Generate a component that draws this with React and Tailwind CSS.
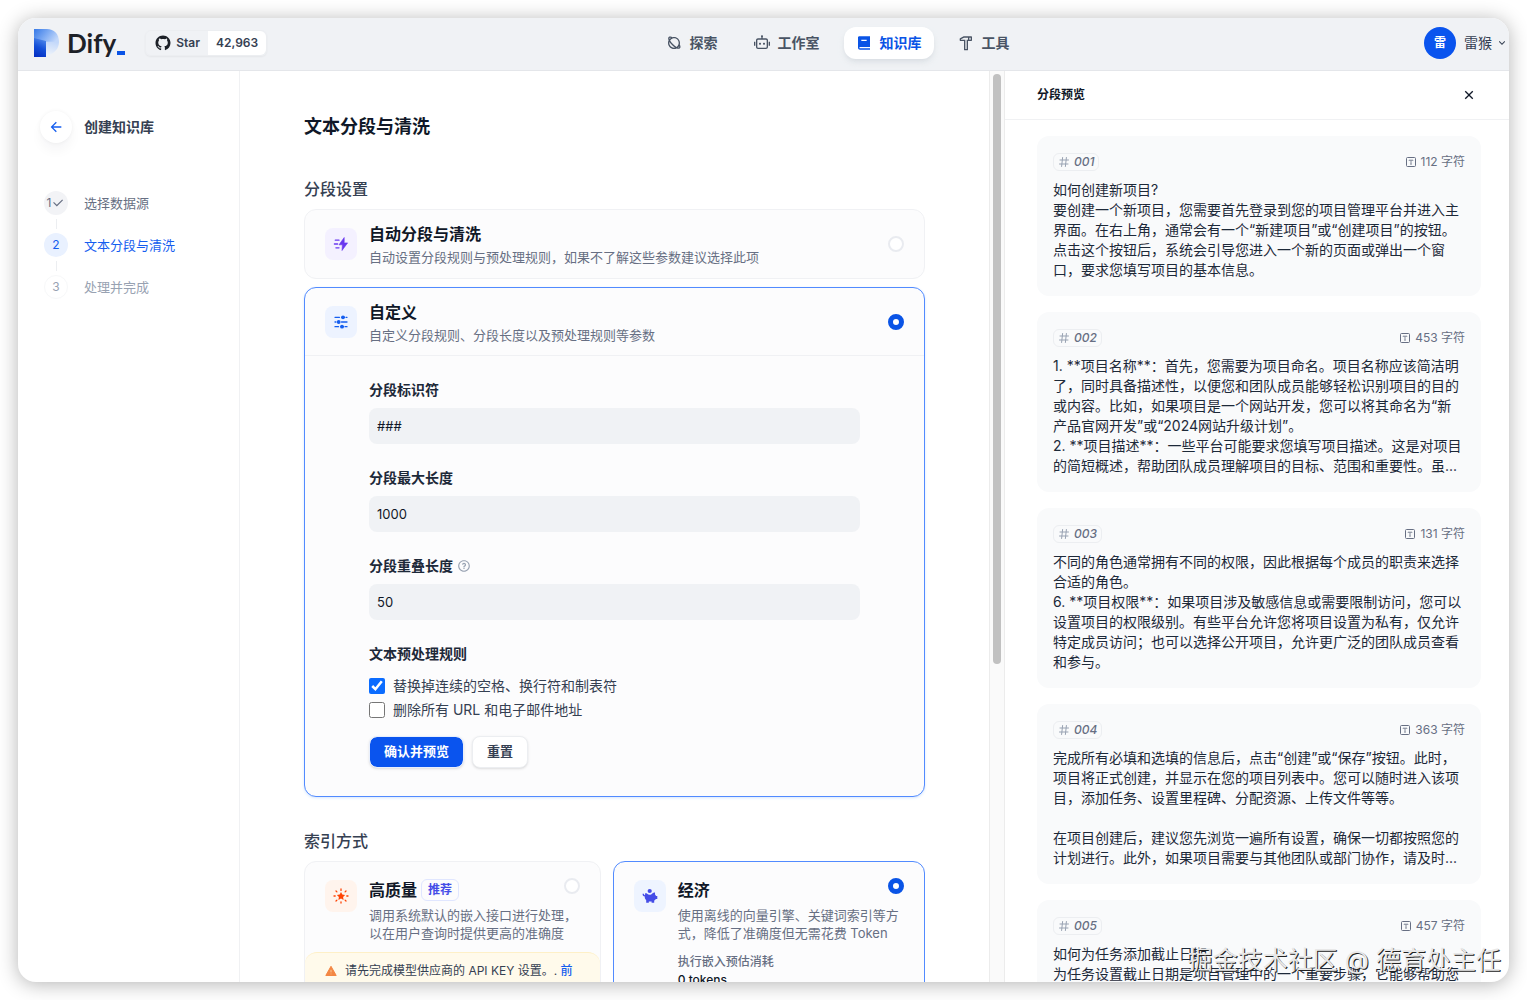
import React, { useState } from 'react';
import {
    RiArrowDownSLine,
    RiArrowLeftLine,
    RiBook2Fill,
    RiCheckLine,
    RiCloseLine,
    RiGithubFill,
    RiHammerLine,
    RiPlanetLine,
    RiQuestionLine,
    RiRobot2Line,
} from 'react-icons/ri';

const navItems = [
    { name: '探索', icon: RiPlanetLine },
    { name: '工作室', icon: RiRobot2Line },
    { name: '知识库', icon: RiBook2Fill, active: true },
    { name: '工具', icon: RiHammerLine },
];

const segments = [
    {
        id: '001',
        count: 112,
        text: '如何创建新项目?\n要创建一个新项目，您需要首先登录到您的项目管理平台并进入主界面。在右上角，通常会有一个“新建项目”或“创建项目”的按钮。点击这个按钮后，系统会引导您进入一个新的页面或弹出一个窗口，要求您填写项目的基本信息。',
    },
    {
        id: '002',
        count: 453,
        text: '1. **项目名称**：首先，您需要为项目命名。项目名称应该简洁明了，同时具备描述性，以便您和团队成员能够轻松识别项目的目的或内容。比如，如果项目是一个网站开发，您可以将其命名为“新产品官网开发”或“2024网站升级计划”。\n2. **项目描述**：一些平台可能要求您填写项目描述。这是对项目的简短概述，帮助团队成员理解项目的目标、范围和重要性。虽...',
    },
    {
        id: '003',
        count: 131,
        text: '不同的角色通常拥有不同的权限，因此根据每个成员的职责来选择合适的角色。\n6. **项目权限**：如果项目涉及敏感信息或需要限制访问，您可以设置项目的权限级别。有些平台允许您将项目设置为私有，仅允许特定成员访问；也可以选择公开项目，允许更广泛的团队成员查看和参与。',
    },
    {
        id: '004',
        count: 363,
        text: '完成所有必填和选填的信息后，点击“创建”或“保存”按钮。此时，项目将正式创建，并显示在您的项目列表中。您可以随时进入该项目，添加任务、设置里程碑、分配资源、上传文件等等。\n\n在项目创建后，建议您先浏览一遍所有设置，确保一切都按照您的计划进行。此外，如果项目需要与其他团队或部门协作，请及时...',
    },
    {
        id: '005',
        count: 457,
        text: '如何为任务添加截止日期\n为任务设置截止日期是项目管理中的一个重要步骤，它能够帮助您',
    },
];

const LogoMark = () => (
    <svg width="25" height="28" viewBox="0 0 25 28" aria-hidden="true">
        <defs>
            <linearGradient id="logo-top" x1="0" y1="0.2" x2="1" y2="0.6">
                <stop offset="0" stopColor="#3f7fe8" />
                <stop offset="0.5" stopColor="#7eabf3" />
                <stop offset="1" stopColor="#c3d8fa" />
            </linearGradient>
            <linearGradient id="logo-stem" x1="0.6" y1="0" x2="0.3" y2="1">
                <stop offset="0" stopColor="#4d87ea" />
                <stop offset="0.5" stopColor="#1450d8" />
                <stop offset="1" stopColor="#0430c4" />
            </linearGradient>
            <linearGradient id="logo-bowl" x1="0.6" y1="0" x2="0.4" y2="1">
                <stop offset="0" stopColor="#c3d8fa" />
                <stop offset="1" stopColor="#eef3fa" />
            </linearGradient>
        </defs>
        <path d="M0 0H13C20 0 25 5 25 13L12 13L0 13Z" fill="url(#logo-top)" />
        <path d="M12 12.8H25C25 20 20 25 12 27Z" fill="url(#logo-bowl)" />
        <path d="M0 9L12 12V28H0Z" fill="url(#logo-stem)" />
    </svg>
);

const ZapIcon = () => (
    <svg width="16" height="16" viewBox="0 0 16 16" fill="none" aria-hidden="true">
        <path d="M2.3 4.2H6M1.4 8H4.6M2.9 11.8H6" stroke="#6938ef" strokeWidth="1.3" strokeLinecap="round" />
        <path d="M11.2 1.5L6 8.8H9.4L9 14.5L14.6 6.9H11.2Z" fill="#6938ef" stroke="#6938ef" strokeWidth="0.6" strokeLinejoin="round" />
    </svg>
);

const SlidersIcon = () => (
    <svg width="16" height="16" viewBox="0 0 16 16" fill="none" aria-hidden="true">
        <path d="M2 3.3H6.5M13 3.3H14M2 8H3M8.5 8H14M2 12.7H5.5M12 12.7H14" stroke="#155eef" strokeWidth="1.3" strokeLinecap="round" />
        <path d="M8.5 3.3H12M4 8H7M7.5 12.7H11" stroke="#155eef" strokeWidth="1.3" />
        <circle cx="10" cy="3.3" r="1.9" fill="#155eef" />
        <circle cx="5.7" cy="8" r="1.9" fill="#155eef" />
        <circle cx="9" cy="12.7" r="1.9" fill="#155eef" />
    </svg>
);

const SparkIcon = () => (
    <svg width="16" height="16" viewBox="0 0 16 16" fill="none" aria-hidden="true">
        <path d="M8 1V2.4M8 13.8V15M1 8H2.2M13.8 8H15M3 3L3.9 3.9M12.1 3.9L13 3M3 13L3.9 12.1M12.1 12.1L13 13" stroke="#ff4405" strokeWidth="1.3" strokeLinecap="round" />
        <path d="M8 4L9.3 6.6L12.1 7L10.1 9L10.6 11.9L8 10.5L5.4 11.9L5.9 9L3.9 7L6.7 6.6Z" fill="#ff4405" />
    </svg>
);

const PiggyIcon = () => (
    <svg width="16" height="16" viewBox="0 0 16 16" fill="#444ce7" aria-hidden="true">
        <circle cx="7.7" cy="3" r="2.1" />
        <path d="M3.4 5C4.2 5 4.8 5.3 5.2 5.8C6.5 7 9.2 7 10.3 5.4C11.2 5.2 12 4.5 13 4.6V6.5C13.5 7 13.8 7.4 14 8H15.3V11H13.8C13.4 11.7 12.8 12.2 12.2 12.5V14.7H9.6V13.5H6.8V14.7H4.2V12.2C3.1 11.3 2.6 10 2.8 8.6C1.3 8.5 0.5 7.5 0.6 5.8H2C2 6.6 2.2 7 2.9 7.2Z" />
    </svg>
);

const WarningIcon = () => (
    <svg width="12" height="12" viewBox="0 0 12 12" fill="none" className="mt-[3px] shrink-0" aria-hidden="true">
        <path d="M6 1.3L11.2 10.5H0.8Z" fill="#f38744" stroke="#f38744" strokeLinejoin="round" />
        <path d="M6 4.8V7.4M6 8.6V9.3" stroke="#fbcf9f" strokeWidth="0.9" />
    </svg>
);

const CharIcon = () => (
    <svg width="12" height="12" viewBox="0 0 12 12" fill="none" stroke="#676f83" aria-hidden="true">
        <rect x="1.5" y="1.5" width="9" height="9" rx="1" />
        <path d="M4 4.7V4.2H8V4.7M6 4.2V8.2M5.3 8.2H6.7" strokeWidth="0.8" />
    </svg>
);

const HashIcon = () => (
    <svg width="12" height="12" viewBox="0 0 12 12" fill="none" stroke="#98a2b2" strokeLinecap="round" aria-hidden="true">
        <path d="M2 4H10.5M1.5 8H10M4.6 1.5L3.6 10.5M8.4 1.5L7.4 10.5" />
    </svg>
);

const Radio = ({ id, name, checked, onChange }) => (
    <input
        id={id}
        type="radio"
        name={name}
        checked={checked}
        onChange={onChange}
        className="h-4 w-4 shrink-0 appearance-none rounded-full border-2 border-[#e9ebf0] bg-white checked:border-[5px] checked:border-[#0a54e6]"
    />
);

const Header = () => (
    <header className="flex h-[53px] shrink-0 items-center justify-between border-b border-[#e4e6ea] bg-[#f0f2f5] pr-px pb-0.5 pl-4">
        <div className="flex items-center gap-5">
            <a href="#" className="flex items-center gap-2">
                <LogoMark />
                <span className="flex items-end gap-px font-['Lato'] text-[26px] leading-8 font-bold text-[#1d2128]">
                    Dify
                    <i className="mb-1 h-1 w-2 bg-[#0a54e6]" />
                </span>
            </a>
            <a href="#" className="flex h-[26px] items-center rounded-md border border-[#eceef1] text-xs font-semibold text-[#354052] shadow-xs">
                <span className="flex items-center gap-1 px-2">
                    <RiGithubFill size={18} className="text-[#1d2128]" />
                    Star
                </span>
                <span className="flex h-full items-center rounded-r-md bg-white px-2">42,963</span>
            </a>
        </div>
        <nav className="flex gap-3">
            {navItems.map(({ name, icon: Icon, active }) => (
                <a
                    key={name}
                    href="#"
                    className={`flex h-8 items-center gap-2 rounded-xl px-3 text-sm font-semibold ${active ? 'bg-white text-[#0a54e6] shadow-md shadow-gray-300/60' : 'text-[#495464]'}`}
                >
                    <Icon size={16} />
                    {name}
                </a>
            ))}
        </nav>
        <button className="flex items-center gap-2 pl-4 text-sm text-[#354052]">
            <span className="flex h-8 w-8 items-center justify-center rounded-full bg-[#0a54ee] text-xs font-bold text-white">雷</span>
            <span className="flex items-center gap-1">
                雷猴
                <RiArrowDownSLine size={12} />
            </span>
        </button>
    </header>
);

const Sidebar = () => (
    <aside className="w-[222px] shrink-0 border-r border-[#f0f1f3] pt-10 pl-[22px]">
        <div className="flex items-center gap-3">
            <button aria-label="返回" className="flex h-8 w-8 items-center justify-center rounded-full bg-white text-[#155eef] shadow-[0_8px_12px_rgba(16,24,40,0.04),0_0_4px_rgba(16,24,40,0.05)]">
                <RiArrowLeftLine size={16} />
            </button>
            <h2 className="text-sm font-semibold text-[#354052]">创建知识库</h2>
        </div>
        <ol className="mt-12 pl-1 text-[13px]">
            <li className="flex items-center gap-4 text-[#676f83]">
                <span className="flex h-6 w-6 items-center justify-center rounded-full bg-[#f2f3f6] text-xs">
                    1<RiCheckLine size={14} className="shrink-0" />
                </span>
                <span className="pt-0.5">选择数据源</span>
            </li>
            <li className="my-1 ml-3 h-[10px] w-px bg-[#eceef1]" />
            <li className="flex items-center gap-4 text-[#155eef]">
                <span className="flex h-6 w-6 items-center justify-center rounded-full bg-[#e9f1ff] text-xs">2</span>
                <span className="pt-0.5">文本分段与清洗</span>
            </li>
            <li className="my-1 ml-3 h-[10px] w-px bg-[#eceef1]" />
            <li className="flex items-center gap-4 text-[#98a2b2]">
                <span className="flex h-6 w-6 items-center justify-center rounded-full border border-[#f7f8f9] text-xs">3</span>
                <span className="pt-0.5">处理并完成</span>
            </li>
        </ol>
    </aside>
);

const Field = ({ id, label, value, help }) => (
    <div className="mb-6">
        <label htmlFor={id} className="flex items-center gap-1 text-sm leading-5 font-semibold text-[#1d2939]">
            {label}
            {help && <RiQuestionLine size={14} className="text-[#98a2b2]" />}
        </label>
        <input
            id={id}
            type="text"
            defaultValue={value}
            className="mt-2 h-9 w-full rounded-lg bg-[#f0f2f5] px-2 text-[13px] text-[#101828] outline-none"
        />
    </div>
);

const SegmentSettings = () => {
    const [mode, setMode] = useState('custom');

    return (
        <section className="mt-9">
            <h3 className="text-base font-medium text-[#354052]">分段设置</h3>
            <label htmlFor="mode-auto" className="mt-2 flex items-center gap-3 rounded-xl border border-[#f0f1f4] bg-[#fcfcfd] px-5 py-3">
                <span className="flex h-8 w-8 items-center justify-center rounded-lg bg-[#f4f1ff]">
                    <ZapIcon />
                </span>
                <span className="flex flex-1 flex-col gap-0.5">
                    <b className="text-base leading-6 font-semibold text-[#101828]">自动分段与清洗</b>
                    <span className="text-[13px] leading-[18px] text-[#676f83]">自动设置分段规则与预处理规则，如果不了解这些参数建议选择此项</span>
                </span>
                <Radio id="mode-auto" name="mode" checked={mode === 'auto'} onChange={() => setMode('auto')} />
            </label>
            <div className="mt-2 rounded-xl border border-[#528bff] bg-[#fcfcfd] shadow-sm shadow-blue-100">
                <label htmlFor="mode-custom" className="flex items-center gap-3 border-b border-[#f0f1f4] px-5 pt-3 pb-[11px]">
                    <span className="flex h-8 w-8 items-center justify-center rounded-lg bg-[#edf3ff]">
                        <SlidersIcon />
                    </span>
                    <span className="flex flex-1 flex-col gap-0.5">
                        <b className="text-base leading-6 font-semibold text-[#101828]">自定义</b>
                        <span className="text-[13px] leading-[18px] text-[#676f83]">自定义分段规则、分段长度以及预处理规则等参数</span>
                    </span>
                    <Radio id="mode-custom" name="mode" checked={mode === 'custom'} onChange={() => setMode('custom')} />
                </label>
                <div className="px-16 pt-6 pb-7">
                    <Field id="separator" label="分段标识符" value="###" />
                    <Field id="max-length" label="分段最大长度" value="1000" />
                    <Field id="overlap" label="分段重叠长度" value="50" help />
                    <h4 className="mb-[10px] text-sm leading-5 font-semibold text-[#1d2939]">文本预处理规则</h4>
                    <label className="flex h-6 items-center gap-2 text-sm text-[#354052]">
                        <input type="checkbox" defaultChecked className="h-4 w-4 accent-[#0b6cff]" />
                        替换掉连续的空格、换行符和制表符
                    </label>
                    <label className="flex h-6 items-center gap-2 text-sm text-[#354052]">
                        <input type="checkbox" className="h-4 w-4 accent-[#0b6cff]" />
                        删除所有 URL 和电子邮件地址
                    </label>
                    <div className="mt-[14px] flex gap-2 text-[13px] font-semibold">
                        <button className="h-8 rounded-lg border border-[#e8effd] bg-[#0a54ee] bg-clip-padding px-[14px] text-white shadow-sm">确认并预览</button>
                        <button className="h-8 rounded-lg border border-[#eceef1] bg-white px-[14px] text-[#354052] shadow-sm">重置</button>
                    </div>
                </div>
            </div>
        </section>
    );
};

const IndexMethod = () => {
    const [method, setMethod] = useState('economy');

    return (
        <section className="mt-8">
            <h3 className="text-base font-medium text-[#354052]">索引方式</h3>
            <div className="mt-2 grid grid-cols-[19fr_20fr] gap-3">
                <div className="overflow-hidden rounded-xl border border-[#f0f1f4] bg-[#fcfcfd]">
                    <label htmlFor="high-quality" className="flex items-start gap-3 px-5 pt-4 pb-[10px]">
                        <span className="mt-0.5 flex h-8 w-8 shrink-0 items-center justify-center rounded-lg bg-[#fff4ed]">
                            <SparkIcon />
                        </span>
                        <span className="flex-1">
                            <span className="flex h-6 items-start justify-between">
                                <span className="flex h-6 items-center gap-1">
                                    <b className="text-base leading-6 font-semibold text-[#101828]">高质量</b>
                                    <span className="rounded-md border border-[#e0e6ff] px-[6px] text-xs leading-5 font-semibold text-[#444ce7]">推荐</span>
                                </span>
                                <Radio id="high-quality" name="method" checked={method === 'quality'} onChange={() => setMethod('quality')} />
                            </span>
                            <span className="mt-1 block text-[13px] leading-[18px] text-[#676f83]">
                                调用系统默认的嵌入接口进行处理，
                                <br />
                                以在用户查询时提供更高的准确度
                            </span>
                        </span>
                    </label>
                    <div className="flex items-start gap-2 rounded-t-xl border-t border-[#fef0c7] bg-[#fffaeb] px-5 pt-[9px] pb-3 text-xs leading-[18px] text-[#354052]">
                        <WarningIcon />
                        <p>
                            请先完成模型供应商的 API KEY 设置。. <a href="#" className="font-medium text-[#155eef]">前</a>
                        </p>
                    </div>
                </div>
                <div className="rounded-xl border border-[#528bff] bg-[#fcfcfd]">
                    <label htmlFor="economy" className="flex items-start gap-3 px-5 pt-4 pb-5">
                        <span className="mt-0.5 flex h-8 w-8 shrink-0 items-center justify-center rounded-lg bg-[#eef4ff]">
                            <PiggyIcon />
                        </span>
                        <span className="flex-1">
                            <span className="flex h-6 items-start justify-between">
                                <b className="text-base leading-6 font-semibold text-[#101828]">经济</b>
                                <Radio id="economy" name="method" checked={method === 'economy'} onChange={() => setMethod('economy')} />
                            </span>
                            <span className="mt-1 block text-[13px] leading-[18px] text-[#676f83]">
                                使用离线的向量引擎、关键词索引等方式，降低了准确度但无需花费 Token
                            </span>
                            <span className="mt-[11px] block text-xs leading-[18px] font-medium text-[#676f83]">执行嵌入预估消耗</span>
                            <span className="block text-xs leading-[18px] font-medium text-[#101828]">0 tokens</span>
                        </span>
                    </label>
                </div>
            </div>
        </section>
    );
};

const Preview = () => (
    <aside className="flex w-[504px] shrink-0 flex-col">
        <div className="flex h-[49px] shrink-0 items-center justify-between border-b border-[#f0f1f3] px-8">
            <h2 className="text-xs font-semibold text-[#101828]">分段预览</h2>
            <button aria-label="关闭">
                <RiCloseLine size={16} className="text-[#101828]" />
            </button>
        </div>
        <div className="flex flex-1 flex-col gap-4 overflow-hidden pt-4 pr-7 pl-8">
            {segments.map((segment) => (
                <article key={segment.id} className="shrink-0 rounded-xl bg-[#f9fafb] p-4">
                    <div className="flex h-5 items-center justify-between">
                        <span className="flex h-[18px] items-center gap-1 rounded-md border border-[#eceef1] px-1 text-xs font-medium text-[#676f83] italic">
                            <HashIcon />
                            {segment.id}
                        </span>
                        <span className="flex items-center gap-1 text-xs text-[#676f83]">
                            <CharIcon />
                            {segment.count} 字符
                        </span>
                    </div>
                    <p className="mt-2 line-clamp-6 text-sm leading-5 whitespace-pre-line text-[#1d2939]">{segment.text}</p>
                </article>
            ))}
        </div>
    </aside>
);

export default function App() {
    return (
        <div className="h-screen bg-white p-[18px] font-[Inter,'Noto_Sans_CJK_SC',sans-serif]">
            <div className="relative flex h-full flex-col overflow-hidden rounded-[18px] bg-white shadow-[0_2px_20px_rgba(0,0,0,0.3)]">
                <Header />
                <div className="flex min-h-0 flex-1">
                    <Sidebar />
                    <main className="min-w-0 flex-1 overflow-hidden px-16 pt-[42px]">
                        <h1 className="text-lg leading-7 font-semibold text-[#101828]">文本分段与清洗</h1>
                        <SegmentSettings />
                        <IndexMethod />
                    </main>
                    <div className="w-4 shrink-0 border-x border-[#ececec] bg-[#fafafa] px-[3px] pt-[3px]">
                        <div className="h-[65%] w-2 rounded-full bg-[#c1c1c1]" />
                    </div>
                    <Preview />
                </div>
                <div className="pointer-events-none absolute right-2 bottom-1 text-[25px] leading-9 text-[#e8e8e8] [text-shadow:1px_1px_0_#222]">
                    掘金技术社区 @ 德育处主任
                </div>
            </div>
        </div>
    );
}
